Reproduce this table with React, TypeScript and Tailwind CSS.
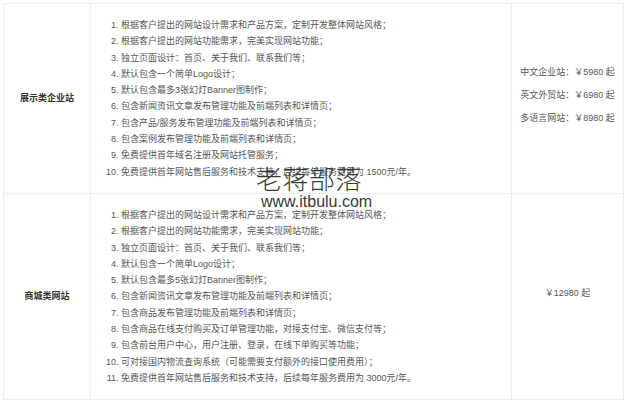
const rows = [
  {
    title: "展示类企业站",
    items: [
      "根据客户提出的网站设计需求和产品方案，定制开发整体网站风格；",
      "根据客户提出的网站功能需求，完美实现网站功能；",
      "独立页面设计：首页、关于我们、联系我们等；",
      "默认包含一个简单Logo设计；",
      "默认包含最多3张幻灯Banner图制作；",
      "包含新闻资讯文章发布管理功能及前端列表和详情页；",
      "包含产品/服务发布管理功能及前端列表和详情页；",
      "包含案例发布管理功能及前端列表和详情页；",
      "免费提供首年域名注册及网站托管服务；",
      "免费提供首年网站售后服务和技术支持，后续每年服务费用为 1500元/年。",
    ],
    prices: ["中文企业站：￥5980 起", "英文外贸站：￥6980 起", "多语言网站：￥8980 起"],
  },
  {
    title: "商城类网站",
    items: [
      "根据客户提出的网站设计需求和产品方案，定制开发整体网站风格；",
      "根据客户提出的网站功能需求，完美实现网站功能；",
      "独立页面设计：首页、关于我们、联系我们等；",
      "默认包含一个简单Logo设计；",
      "默认包含最多5张幻灯Banner图制作；",
      "包含新闻资讯文章发布管理功能及前端列表和详情页；",
      "包含商品发布管理功能及前端列表和详情页；",
      "包含商品在线支付购买及订单管理功能，对接支付宝、微信支付等；",
      "包含前台用户中心，用户注册、登录，在线下单购买等功能；",
      "可对接国内物流查询系统（可能需要支付额外的接口使用费用）；",
      "免费提供首年网站售后服务和技术支持，后续每年服务费用为 3000元/年。",
    ],
    prices: ["￥12980 起"],
  },
];

export default function App() {
  return (
    <div
      className="relative w-[627px] h-[403px] bg-white overflow-hidden pt-[3px] pl-[3px]"
      style={{ fontFamily: '"Liberation Sans", "Noto Sans CJK SC", sans-serif' }}
    >
      <table className="border-collapse table-fixed w-[620px] text-[9px] text-[#555]">
        <colgroup>
          <col className="w-[87px]" />
          <col className="w-[421px]" />
          <col className="w-[112px]" />
        </colgroup>
        <tbody>
          {rows.map((row) => (
            <tr key={row.title}>
              <td className="border border-[#eee] text-center align-middle font-bold text-[#333]">
                {row.title}
              </td>
              <td className="border border-[#eee] py-[13px] pl-[30px] align-middle">
                <ol className="list-decimal leading-[16.3px]">
                  {row.items.map((item) => (
                    <li key={item}>{item}</li>
                  ))}
                </ol>
              </td>
              <td className="border border-[#eee] text-center align-middle">
                <div className="leading-[23px] pb-[6px]">
                  {row.prices.map((p) => (
                    <div key={p}>{p}</div>
                  ))}
                </div>
              </td>
            </tr>
          ))}
        </tbody>
      </table>

      {/* watermark */}
      <div
        className="absolute left-[256px] top-[165px] text-[26px] leading-none font-light text-[#3a3a3a] tracking-[0.5px]"
        style={{ fontFamily: '"Noto Sans CJK SC", sans-serif' }}
      >
        老蒋部落
      </div>
      <div className="absolute left-[261px] top-[194px] text-[16px] leading-none text-[#3a3a3a]">
        www.itbulu.com
      </div>
    </div>
  );
}
